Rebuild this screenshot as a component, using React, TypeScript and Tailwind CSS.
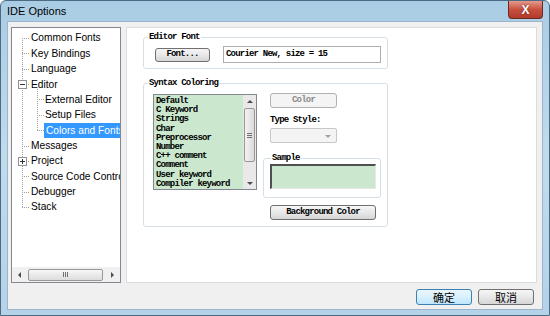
import React from "react";

const mono = { fontFamily: '"Liberation Mono", "Courier New", monospace' };
const ui = { fontFamily: '"Liberation Sans", Arial, sans-serif' };
const cjk = { fontFamily: '"Noto Sans CJK SC", "Noto Sans", sans-serif' };

const treeItems: { label: string; level: number; selected?: boolean }[] = [
  { label: "Common Fonts", level: 1 },
  { label: "Key Bindings", level: 1 },
  { label: "Language", level: 1 },
  { label: "Editor", level: 1 },
  { label: "External Editor", level: 2 },
  { label: "Setup Files", level: 2 },
  { label: "Colors and Fonts", level: 2, selected: true },
  { label: "Messages", level: 1 },
  { label: "Project", level: 1 },
  { label: "Source Code Control", level: 1 },
  { label: "Debugger", level: 1 },
  { label: "Stack", level: 1 },
];

const syntaxItems = [
  "Default",
  "C Keyword",
  "Strings",
  "Char",
  "Preprocessor",
  "Number",
  "C++ comment",
  "Comment",
  "User keyword",
  "Compiler keyword",
];

const RH = 15.36;
const cy = (i: number) => 10 + RH * i;

function TreeLines() {
  const ticks1 = [0, 1, 2, 3, 7, 8, 9, 10, 11];
  const ticks2 = [4, 5, 6];
  return (
    <svg className="absolute left-0 top-0" width="108" height="200" shapeRendering="crispEdges">
      <g stroke="#a0a0a0" strokeWidth="1" strokeDasharray="1 1" fill="none">
        <line x1="10.5" y1={cy(0)} x2="10.5" y2={cy(11) + 0.5} />
        {ticks1.map((i) => (
          <line key={i} x1="10" y1={Math.round(cy(i)) + 0.5} x2="18" y2={Math.round(cy(i)) + 0.5} />
        ))}
        <line x1="25.5" y1={cy(3) + 5} x2="25.5" y2={cy(6) + 0.5} />
        {ticks2.map((i) => (
          <line key={i} x1="25" y1={Math.round(cy(i)) + 0.5} x2="32" y2={Math.round(cy(i)) + 0.5} />
        ))}
      </g>
      {[3, 8].map((i) => {
        const y = Math.round(cy(i));
        return (
          <g key={i}>
            <rect x="6.5" y={y - 3.5} width="8" height="8" fill="#fff" stroke="#919191" />
            <line x1="8" y1={y + 0.5} x2="13" y2={y + 0.5} stroke="#333" />
            {i === 8 && <line x1="10.5" y1={y - 2} x2="10.5" y2={y + 3} stroke="#333" />}
          </g>
        );
      })}
    </svg>
  );
}

function Tri({ dir, color = "#4d4d4d" }: { dir: "l" | "r" | "u" | "d"; color?: string }) {
  const pts = {
    l: "5,1 5,7 2,4",
    r: "3,1 3,7 6,4",
    u: "1,5 7,5 4,2",
    d: "1,3 7,3 4,6",
  }[dir];
  return (
    <svg width="8" height="8" viewBox="0 0 8 8">
      <polygon points={pts} fill={color} />
    </svg>
  );
}

function Btn({ children, className = "" }: { children: React.ReactNode; className?: string }) {
  return (
    <div
      className={`flex items-center justify-center rounded-[3px] border border-[#707070] bg-gradient-to-b from-[#f6f6f6] via-[#e8e8e8] to-[#d6d6d6] text-black ${className}`}
    >
      {children}
    </div>
  );
}

export default function App() {
  return (
    <div className="relative w-[550px] h-[316px] overflow-hidden rounded-t-[6px] border border-[#4d6a85] bg-gradient-to-b from-[#a9cde4] via-[#c0dbec] to-[#b4d2e8]">
      {/* title bar */}
      <div className="h-[20px] flex items-center pl-[6px] text-[11px] text-black" style={ui}>
        IDE Options
      </div>
      <div className="absolute right-[6px] top-0 w-[35px] h-[18px] rounded-b-[4px] border border-t-0 border-[#6b2b25] bg-gradient-to-b from-[#e49a8c] via-[#c9503f] to-[#b23a2b] flex items-center justify-center">
        <span className="text-white text-[12px] font-bold leading-none" style={{ ...ui, textShadow: "0 0 2px #5a1a12" }}>
          X
        </span>
      </div>

      {/* dialog client area */}
      <div className="ml-[6px] w-[536px] h-[289px] border border-[#9db5cc] bg-[#f0f0f0] flex flex-col">
        <div className="flex pt-[5px] pl-[3px] gap-[5px]">
          {/* tree */}
          <div className="w-[110px] h-[256px] border border-[#828790] bg-white flex flex-col overflow-hidden">
            <div className="relative flex-1 pt-[2.3px]">
              <TreeLines />
              {treeItems.map((it) => (
                <div
                  key={it.label}
                  className="relative flex items-center h-[15.36px] whitespace-nowrap text-[10.2px] text-black"
                  style={{ ...ui, paddingLeft: it.level === 1 ? 18 : 32 }}
                >
                  <span className={it.selected ? "bg-[#3399ff] text-white px-[2px] leading-[15px]" : "px-[1px] leading-[15px]"}>
                    {it.label}
                  </span>
                </div>
              ))}
            </div>
            <div className="h-[15px] flex items-center bg-[#f0f0f0] px-[1px]">
              <div className="w-[14px] flex items-center justify-center">
                <Tri dir="l" />
              </div>
              <div className="ml-[1px] w-[75px] h-[12px] rounded-[2px] border border-[#979797] bg-gradient-to-b from-[#f7f7f7] to-[#dcdcdc] flex items-center justify-center gap-[1px]">
                <span className="w-[1px] h-[5px] bg-[#707070]" />
                <span className="w-[1px] h-[5px] bg-[#707070]" />
                <span className="w-[1px] h-[5px] bg-[#707070]" />
              </div>
              <div className="flex-1 flex items-center justify-end pr-[3px]">
                <Tri dir="r" />
              </div>
            </div>
          </div>

          {/* right panel */}
          <div className="w-[411px] h-[256px] border border-[#d8dde2] bg-white">
            <fieldset className="ml-[16px] mt-[4px] w-[245px] border border-[#d5dfe5] rounded-[3px] pl-[11px] pb-[5px] pt-[4px]">
              <legend className="-ml-[7px] px-[1px] text-[9px] leading-[10px] font-bold tracking-[-0.8px] text-black" style={mono}>
                Editor Font
              </legend>
              <div className="flex items-center">
                <Btn className="w-[55px] h-[14px]">
                  <span className="text-[9px] font-bold tracking-[-0.8px]" style={mono}>Font...</span>
                </Btn>
                <div className="ml-[13px] w-[158px] h-[17px] border border-[#abadb3] bg-white flex items-center pl-[2px] text-[9px] font-bold tracking-[-0.8px] text-black" style={mono}>
                  Courier New, size = 15
                </div>
              </div>
            </fieldset>

            <fieldset className="ml-[16px] mt-[9px] w-[245px] border border-[#d5dfe5] rounded-[3px] pl-[9px] pt-[6px] pb-[6px]">
              <legend className="-ml-[5px] px-[1px] text-[9px] leading-[10px] font-bold tracking-[-0.8px] text-black" style={mono}>
                Syntax Coloring
              </legend>
              <div className="flex items-start">
                {/* list */}
                <div className="w-[104px] h-[96px] border border-[#828790] bg-[#cbe8cf] flex">
                  <div className="flex-1 pl-[2px] pt-[2px] text-[9px] leading-[9.2px] font-bold tracking-[-0.8px] text-black whitespace-nowrap" style={mono}>
                    {syntaxItems.map((s) => (
                      <div key={s}>{s}</div>
                    ))}
                  </div>
                  <div className="w-[13px] bg-[#e9e9e9] flex flex-col items-center">
                    <div className="h-[13px] flex items-center">
                      <Tri dir="u" />
                    </div>
                    <div className="w-[11px] h-[54px] rounded-[2px] border border-[#979797] bg-gradient-to-r from-[#f4f4f4] to-[#dadada] flex flex-col items-center justify-center gap-[1px]">
                      <span className="w-[5px] h-[1px] bg-[#707070]" />
                      <span className="w-[5px] h-[1px] bg-[#707070]" />
                      <span className="w-[5px] h-[1px] bg-[#707070]" />
                    </div>
                    <div className="flex-1" />
                    <div className="h-[13px] flex items-center">
                      <Tri dir="d" />
                    </div>
                  </div>
                </div>

                {/* right column */}
                <div className="ml-[6px] -mt-[1px] flex flex-col">
                  <div className="ml-[7px] w-[67px] h-[15px] rounded-[3px] border border-[#adb2b5] bg-[#f4f4f4] flex items-center justify-center text-[9px] font-bold tracking-[-0.8px] text-[#8a8a8a]" style={mono}>
                    Color
                  </div>
                  <div className="ml-[7px] mt-[7px] h-[10px] leading-[10px] text-[9px] font-bold tracking-[-0.8px] text-black" style={mono}>
                    Type Style:
                  </div>
                  <div className="ml-[7px] mt-[3px] w-[67px] h-[15px] rounded-[2px] border border-[#c4c8cb] bg-[#f4f4f4] flex items-center justify-end pr-[4px]">
                    <Tri dir="d" color="#a0a0a0" />
                  </div>
                  <fieldset className="mt-[10px] w-[118px] border border-[#d5dfe5] rounded-[3px] pl-[6px] pt-[1px] pb-[8px]">
                    <legend className="ml-[1px] px-[1px] text-[9px] leading-[10px] font-bold tracking-[-0.8px] text-black" style={mono}>
                      Sample
                    </legend>
                    <div className="w-[106px] h-[25px] border-t-2 border-l-2 border-b border-r border-t-[#505050] border-l-[#505050] border-b-[#e8e8e8] border-r-[#e8e8e8] bg-[#cbe8cf]" />
                  </fieldset>
                  <Btn className="ml-[7px] mt-[7px] w-[106px] h-[15px]">
                    <span className="text-[9px] font-bold tracking-[-0.8px]" style={mono}>Background Color</span>
                  </Btn>
                </div>
              </div>
            </fieldset>
          </div>
        </div>

        {/* bottom buttons */}
        <div className="flex justify-end gap-[6px] pr-[8px] mt-[6px]">
          <div className="w-[56px] h-[16px] rounded-[3px] border border-[#3c7fb1] bg-gradient-to-b from-[#eaf6fd] via-[#d9f0fc] to-[#bee6fd] flex items-center justify-center text-[11px] text-black" style={cjk}>
            确定
          </div>
          <Btn className="w-[56px] h-[16px]">
            <span className="text-[11px]" style={cjk}>取消</span>
          </Btn>
        </div>
      </div>
    </div>
  );
}
